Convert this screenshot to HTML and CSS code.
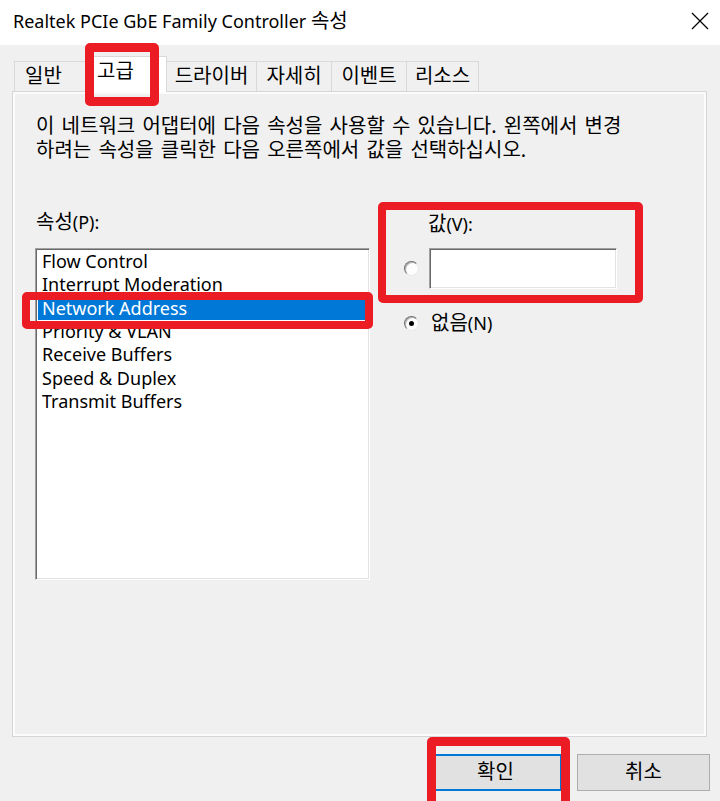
FILE: index.html
```html
<!DOCTYPE html>
<html lang="ko">
<head>
<meta charset="utf-8">
<title>Realtek PCIe GbE Family Controller 속성</title>
<link rel="stylesheet" href="styles.css">
</head>
<body>
<div class="window">
  <div class="titlebar">
    <span class="title">Realtek PCIe GbE Family Controller <span class="ko">속성</span></span>
    <svg class="close" width="18" height="18" viewBox="0 0 18 18" aria-hidden="true">
      <path d="M1 1 L17 17 M17 1 L1 17" stroke="#000" stroke-width="1.2" fill="none"/>
    </svg>
  </div>
  <div class="main">
    <div class="tabs">
      <div class="tab tab-general">일반</div>
      <div class="tab tab-advanced active">고급</div>
      <div class="tab tab-driver">드라이버</div>
      <div class="tab tab-details">자세히</div>
      <div class="tab tab-events">이벤트</div>
      <div class="tab tab-resources">리소스</div>
    </div>
    <div class="panel">
      <p class="desc">이 네트워크 어댑터에 다음 속성을 사용할 수 있습니다. 왼쪽에서 변경<br>하려는 속성을 클릭한 다음 오른쪽에서 값을 선택하십시오.</p>
      <div class="columns">
        <div class="col-left">
          <div class="label"><span class="ko">속성</span>(P):</div>
          <ul class="listbox">
            <li>Flow Control</li>
            <li>Interrupt Moderation</li>
            <li class="selected">Network Address</li>
            <li>Priority &amp; VLAN</li>
            <li>Receive Buffers</li>
            <li>Speed &amp; Duplex</li>
            <li>Transmit Buffers</li>
          </ul>
        </div>
        <div class="col-right">
          <div class="label value-label"><span class="ko">값</span>(V):</div>
          <div class="value-row">
            <span class="radio"></span>
            <div class="textbox"></div>
          </div>
          <div class="none-row">
            <span class="radio checked"></span>
            <span class="none-label"><span class="ko">없음</span>(N)</span>
          </div>
        </div>
      </div>
    </div>
    <div class="buttons">
      <div class="btn btn-default">확인</div>
      <div class="btn">취소</div>
    </div>
  </div>
  <div class="mark mark-tab"></div>
  <div class="mark mark-item"></div>
  <div class="mark mark-value"></div>
  <div class="mark mark-ok"></div>
</div>
</body>
</html>
```
FILE: styles.css
```css
* { box-sizing: border-box; }
html, body { margin: 0; padding: 0; }
body {
  font-family: "Noto Sans", "Noto Sans CJK KR", sans-serif;
  font-size: 18px;
  color: #000;
  background: #f0f0f0;
}
.ko { font-size: 20px; }
.window {
  position: relative;
  width: 720px;
  height: 801px;
  overflow: hidden;
  background: #f0f0f0;
}
.titlebar {
  height: 45px;
  background: #fff;
  display: flex;
  align-items: center;
  justify-content: space-between;
  padding: 0 13px 4px 13px;
}
.title { font-size: 18px; line-height: 24px; }
.close { margin-right: -2px; }

.main { padding: 11px 13px 0 12px; }

.tabs {
  display: flex;
  align-items: flex-end;
  padding-left: 2px;
}
.tab {
  height: 30px;
  border: 1px solid #d9d9d9;
  border-bottom: 0;
  background: #f0f0f0;
  display: flex;
  align-items: center;
  justify-content: center;
  margin-left: -1px;
  font-size: 20px;
  line-height: 24px;
  padding-bottom: 1px;
  white-space: nowrap;
}
.tab-general { width: 74px; margin-left: 0; justify-content: flex-start; padding-left: 10px; }
.tab-advanced { width: 81px; justify-content: flex-start; padding-left: 10px; }
.tab-driver { width: 91px; }
.tab-details { width: 76px; }
.tab-events { width: 76px; }
.tab-resources { width: 73px; }
.tab.active {
  height: 36px;
  margin-left: -2px;
  margin-bottom: -1px;
  background: #fff;
  position: relative;
  z-index: 1;
  padding-bottom: 8px;
}

.panel {
  height: 646px;
  border: 1px solid #d6d6d6;
  box-shadow: inset 0 0 0 2px #fbfbfb;
  padding: 22px 20px 0 22px;
}
.desc {
  margin: 0;
  font-size: 20px;
  line-height: 24px;
  word-spacing: 2px;
  padding-left: 1px;
  white-space: nowrap;
}
.columns {
  display: grid;
  grid-template-columns: 335px 1fr;
  column-gap: 35px;
  margin-top: 48px;
}
.label { line-height: 24px; padding-left: 1px; }
.listbox {
  list-style: none;
  margin: 14px 0 0 0;
  padding: 1px 1px;
  height: 332px;
  background: #fff;
  border: 1px solid;
  border-color: #a0a0a0 #ffffff #ffffff #a0a0a0;
  box-shadow: inset 1px 1px 0 #696969, inset -1px -1px 0 #e3e3e3;
}
.listbox li {
  height: 23.35px;
  line-height: 23.35px;
  padding-left: 4px;
  margin-left: 1px;
  white-space: nowrap;
}
.listbox li.selected {
  background: #0078d7;
  color: #fff;
}

.value-label { margin-top: 2px; padding-left: 23px; }
.value-row {
  display: flex;
  align-items: center;
  margin-top: 12px;
}
.radio {
  width: 15px;
  height: 15px;
  border-radius: 50%;
  border: 1.5px solid;
  border-color: #6e6e6e #e8e8e8 #e8e8e8 #6e6e6e;
  background: #fdfdfd;
  box-shadow: inset 1px 1px 0 #b4b4b4;
  flex: none;
  display: flex;
  align-items: center;
  justify-content: center;
  margin-left: -1px;
}
.radio.checked::after {
  content: "";
  width: 5px;
  height: 5px;
  border-radius: 50%;
  background: #000;
}
.textbox {
  margin-left: 10px;
  width: 188px;
  height: 41px;
  background: #fff;
  border: 1px solid;
  border-color: #a0a0a0 #ffffff #ffffff #a0a0a0;
  box-shadow: inset 1px 1px 0 #696969, inset -1px -1px 0 #e3e3e3;
}
.none-row {
  display: flex;
  align-items: center;
  margin-top: 22px;
  height: 24px;
}
.none-label { margin-left: 12px; line-height: 24px; }

.buttons {
  display: flex;
  justify-content: flex-end;
  gap: 15px;
  margin-top: 17px;
  margin-right: -3px;
}
.btn {
  width: 133px;
  height: 37px;
  background: #e1e1e1;
  border: 1px solid #adadad;
  display: flex;
  align-items: center;
  justify-content: center;
  font-size: 20px;
  line-height: 24px;
  padding-bottom: 1px;
}
.btn-default { border: 2px solid #0078d7; }

.mark {
  position: absolute;
  border: 9px solid #ec1c24;
  border-radius: 5px;
  pointer-events: none;
  z-index: 5;
}
.mark-tab { left: 85px; top: 43px; width: 74px; height: 63px; }
.mark-item { left: 22px; top: 292px; width: 351px; height: 37px; border-width: 8px; }
.mark-value { left: 378px; top: 202px; width: 265px; height: 101px; border-width: 8px; }
.mark-ok { left: 427px; top: 737px; width: 143px; height: 80px; }
```
